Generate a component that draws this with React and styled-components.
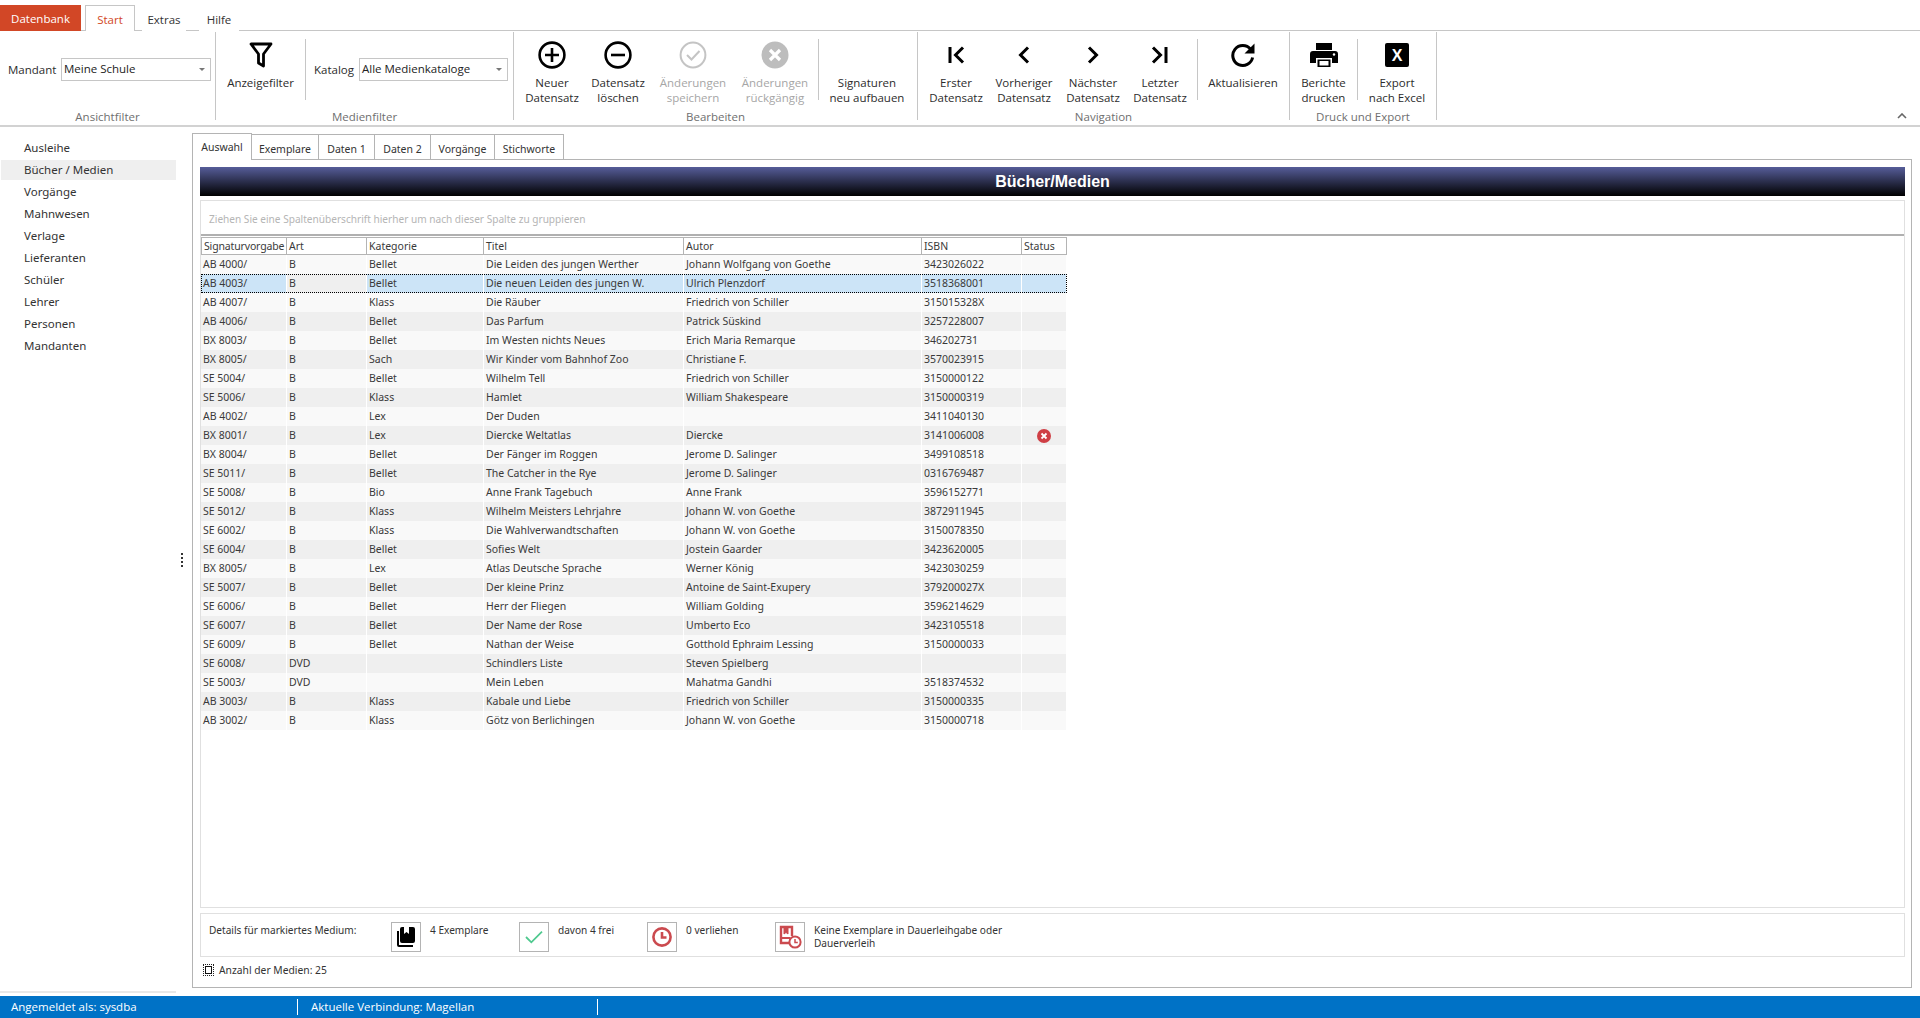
import React from 'react';
import styled, { createGlobalStyle } from 'styled-components';

const GlobalStyle = createGlobalStyle`
  html, body { margin: 0; padding: 0; height: 100%; background: #fff; overflow: hidden; }
  body { font-family: "Open Sans", "Liberation Sans", sans-serif; color: #2c2c2c; }
  * { box-sizing: border-box; }
`;

const uiFont = `"Open Sans", "Liberation Sans", sans-serif`;
const gridFont = `"Noto Sans", "Liberation Sans", sans-serif`;

const Page = styled.div`
  height: 1018px;
  display: flex;
  flex-direction: column;
`;

/* ribbon */
const TabStrip = styled.div`
  height: 31px;
  padding-top: 5px;
  display: flex;
  align-items: stretch;
  border-bottom: 1px solid #c6c6c6;
  font-family: ${uiFont};
  font-size: 11.5px;
`;

const AppTab = styled.div`
  width: 81px;
  margin-bottom: -1px;
  background: #d24726;
  color: #fff;
  display: flex;
  align-items: center;
  justify-content: center;
`;

const RibbonTab = styled.div`
  width: ${p => p.$w}px;
  margin-left: ${p => p.$ml || 0}px;
  margin-bottom: -1px;
  display: flex;
  align-items: center;
  justify-content: center;
  color: ${p => (p.$active ? '#d24726' : '#333')};
  background: #fff;
  border: ${p => (p.$active ? '1px solid #c6c6c6' : 'none')};
  border-bottom: none;
  padding-top: 2px;
`;

const Ribbon = styled.div`
  position: relative;
  height: 96px;
  display: flex;
  border-bottom: 2px solid #d2d2d2;
  font-family: ${uiFont};
  font-size: 11.5px;
  line-height: 15px;
`;

const Group = styled.div`
  width: ${p => p.$w}px;
  height: 88px;
  margin-top: 1px;
  border-right: 1px solid #c6c6c6;
`;

const GroupBody = styled.div`
  height: 76px;
  display: flex;
  padding-left: ${p => p.$pl || 0}px;
`;

const GroupLabel = styled.div`
  height: 18px;
  text-align: center;
  color: #6f6f6f;
  line-height: 18px;
`;

const InnerSep = styled.div`
  width: 1px;
  height: 61px;
  margin-top: 7px;
  margin-left: ${p => p.$ml || 0}px;
  background: #c6c6c6;
  flex: none;
`;

const RibbonButton = styled.div`
  width: ${p => p.$w}px;
  flex: none;
  display: flex;
  flex-direction: column;
  align-items: center;
  padding-top: 10px;
  text-align: center;
  color: ${p => (p.$off ? '#a6a6a6' : '#2c2c2c')};
`;

const IconSlot = styled.div`
  width: 32px;
  height: 26px;
  margin-bottom: 7px;
  display: flex;
  align-items: center;
  justify-content: center;
  flex: none;
`;

const FieldLabel = styled.span`
  margin-left: ${p => p.$ml}px;
  width: ${p => p.$w}px;
  flex: none;
  margin-top: 30px;
`;

const Combo = styled.div`
  width: ${p => p.$w}px;
  height: 23px;
  margin-top: 26px;
  flex: none;
  border: 1px solid #c6c6c6;
  padding: 2px 2px 0 2px;
  display: flex;
  justify-content: space-between;
  color: #222;
`;

const ComboArrow = styled.span`
  width: 0;
  height: 0;
  margin: 7px 3px 0 0;
  border-left: 3px solid transparent;
  border-right: 3px solid transparent;
  border-top: 3px solid #777;
`;

const ExcelBadge = styled.div`
  width: 24px;
  height: 24px;
  border-radius: 2px;
  background: #000;
  color: #fff;
  font-family: "Liberation Sans", sans-serif;
  font-size: 16px;
  font-weight: 700;
  display: flex;
  align-items: center;
  justify-content: center;
`;

const Collapse = styled.svg`
  position: absolute;
  right: 13px;
  top: 82px;
`;

/* body */
const Main = styled.div`
  flex: 1;
  min-height: 0;
  display: flex;
  font-family: ${gridFont};
`;

const Sidebar = styled.div`
  width: 176px;
  height: 866px;
  flex: none;
  padding: 11px 0 0 1px;
  border-bottom: 2px solid #e8e8e8;
  font-size: 11.5px;
  color: #333;
`;

const NavItem = styled.div`
  height: 20px;
  margin-bottom: 2px;
  padding-left: 23px;
  line-height: 20px;
  background: ${p => (p.$active ? '#efefef' : 'transparent')};
`;

const Splitter = styled.div`
  width: 16px;
  flex: none;
  display: flex;
  flex-direction: column;
  justify-content: center;
  align-items: center;
  gap: 2px;
  padding: 0 4px 4px 0;
`;

const Dot = styled.span`
  width: 2px;
  height: 2px;
  background: #333;
`;

const Workspace = styled.div`
  width: 1720px;
  flex: none;
  display: flex;
  flex-direction: column;
  padding: 6px 0 8px;
  font-size: 10.5px;
`;

const PageTabs = styled.div`
  height: 26px;
  flex: none;
  display: flex;
  align-items: flex-end;
  position: relative;
  z-index: 1;
`;

const PageTab = styled.div`
  width: ${p => p.$w}px;
  height: ${p => (p.$active ? 27 : 25)}px;
  margin-bottom: ${p => (p.$active ? -1 : 0)}px;
  padding-top: ${p => (p.$active ? 0 : 3)}px;
  display: flex;
  align-items: center;
  justify-content: center;
  background: #fff;
  color: #333;
  border: 1px solid #b4b4b4;
  border-bottom: none;
  border-left: ${p => (p.$active || p.$first ? '1px solid #b4b4b4' : 'none')};
`;

const Panel = styled.div`
  flex: 1;
  min-height: 0;
  border: 1px solid #b4b4b4;
  padding: 7px 6px 0 7px;
  display: flex;
  flex-direction: column;
`;

const TitleBar = styled.div`
  height: 29px;
  flex: none;
  background: linear-gradient(#565d99, #000);
  color: #fff;
  font-family: "Liberation Sans", sans-serif;
  font-size: 16px;
  font-weight: 700;
  display: flex;
  align-items: center;
  justify-content: center;
`;

const GridFrame = styled.div`
  height: 708px;
  margin-top: 4px;
  flex: none;
  border: 1px solid #e0e0e0;
  display: flex;
  flex-direction: column;
`;

const GroupHint = styled.div`
  height: 35px;
  flex: none;
  padding: 7px 0 0 8px;
  line-height: 22px;
  font-size: 10.1px;
  color: #b5b5b5;
  border-bottom: 2px solid #b0b0b0;
`;

const GridTable = styled.div`
  width: 866px;
  line-height: 19px;
  color: #3a3a3a;
`;

const columns = '86px 80px 117px 200px 238px 100px 45px';

const HeadRow = styled.div`
  display: grid;
  grid-template-columns: ${columns};
  height: 19px;
  border-top: 1px solid #fff;
`;

const HeadCell = styled.div`
  border: 1px solid #b4b4b4;
  border-left: ${p => (p.$first ? '1px solid #b4b4b4' : 'none')};
  padding-left: 2px;
  line-height: 16px;
  letter-spacing: ${p => (p.$first ? '-0.15px' : '0')};
  white-space: nowrap;
  overflow: hidden;
`;

const Row = styled.div`
  display: grid;
  grid-template-columns: ${columns};
  height: 19px;
  background: ${p => (p.$even ? '#efefef' : '#f9f9f9')};
  ${p => p.$selected && 'background: #cce4f7; outline: 1px dotted #000; outline-offset: -1px;'}
`;

const Cell = styled.div`
  padding-left: 2px;
  border-right: 1px solid #fff;
  white-space: nowrap;
  overflow: hidden;
  display: flex;
  align-items: center;
  background: ${p => (p.$focus ? '#efefef' : 'transparent')};
`;

const StatusDot = styled.svg`
  margin-left: 13px;
`;

const DetailBox = styled.div`
  height: 44px;
  margin-top: 5px;
  flex: none;
  border: 1px solid #e0e0e0;
  display: flex;
  padding: 8px 0 0 8px;
  line-height: 13px;
  font-size: 10.1px;
  color: #333;
`;

const DetailTitle = styled.div`
  width: 182px;
  flex: none;
  padding-top: 2px;
`;

const DetailItem = styled.div`
  width: ${p => p.$w}px;
  flex: none;
  display: flex;
  gap: 9px;
`;

const DetailIcon = styled.div`
  width: 30px;
  height: 30px;
  flex: none;
  border: 1px solid #b4b4b4;
  display: flex;
  align-items: center;
  justify-content: center;
`;

const DetailText = styled.div`
  padding-top: 2px;
`;

const CountLine = styled.div`
  display: flex;
  align-items: center;
  gap: 5px;
  margin: 6px 0 0 3px;
  height: 14px;
  font-size: 10.3px;
  color: #333;
`;

const CountMark = styled.div`
  width: 11px;
  height: 12px;
  border: 1px dotted #222;
  display: flex;
  align-items: center;
  justify-content: center;
`;

const CountCore = styled.span`
  width: 7px;
  height: 8px;
  border: 1px solid #111;
`;

const StatusBar = styled.div`
  height: 22px;
  flex: none;
  background: #0072c6;
  color: #fff;
  display: flex;
  align-items: center;
  font-family: ${uiFont};
  font-size: 11.5px;
`;

const StatusPane = styled.div`
  width: ${p => p.$w}px;
  height: 16px;
  padding-left: ${p => p.$pl}px;
  line-height: 15px;
  border-right: 1px solid #fff;
`;

/* icons */
const CirclePlus = () => (
  <svg width="30" height="30" viewBox="0 0 30 30" fill="none" stroke="#000" strokeWidth="2.6">
    <circle cx="15" cy="15" r="12.4" />
    <path d="M15 8v14M8 15h14" />
  </svg>
);

const CircleMinus = () => (
  <svg width="30" height="30" viewBox="0 0 30 30" fill="none" stroke="#000" strokeWidth="2.6">
    <circle cx="15" cy="15" r="12.4" />
    <path d="M8 15h14" />
  </svg>
);

const CircleCheck = () => (
  <svg width="30" height="30" viewBox="0 0 30 30" fill="none" stroke="#c4c4c4" strokeWidth="2">
    <circle cx="15" cy="15" r="12.4" />
    <path d="M9 15l4.5 4.5L21.5 11" />
  </svg>
);

const CircleCross = () => (
  <svg width="30" height="30" viewBox="0 0 30 30">
    <circle cx="15" cy="15" r="13.5" fill="#bdbdbd" />
    <path d="M10 10l10 10M20 10L10 20" stroke="#fff" strokeWidth="3.2" />
  </svg>
);

const FunnelIcon = () => (
  <svg width="24" height="26" viewBox="0 0 24 26" fill="none" stroke="#000" strokeWidth="2.8" strokeLinejoin="round">
    <path d="M2 2h20l-7.5 10v12L9.5 21V12z" />
  </svg>
);

const NavIcon = ({ d }) => (
  <svg width="22" height="22" viewBox="0 0 22 22" fill="none" stroke="#000" strokeWidth="3">
    <path d={d} />
  </svg>
);

const RefreshIcon = () => (
  <svg width="26" height="26" viewBox="0 0 26 26" fill="none">
    <path d="M20.6 7.2A10 10 0 1 0 22.6 15.5" stroke="#000" strokeWidth="3" />
    <path d="M24.5 1.5v10h-10z" fill="#000" />
  </svg>
);

const PrinterIcon = () => (
  <svg width="28" height="26" viewBox="0 0 28 26">
    <path d="M6 1h16v7H6z" fill="#000" />
    <path d="M3 9h22a3 3 0 0 1 3 3v9h-6v-5H6v5H0v-9a3 3 0 0 1 3-3z" fill="#000" />
    <path d="M7.5 17.5h13V25h-13z" fill="#000" />
    <path d="M9.5 19h9v4.5h-9z" fill="#fff" />
    <circle cx="24" cy="12.5" r="1.2" fill="#fff" />
  </svg>
);

const BooksIcon = () => (
  <svg width="20" height="22" viewBox="0 0 20 22">
    <path d="M1 5h2v14h14v2H3a2 2 0 0 1-2-2z" fill="#000" />
    <path d="M6 1h2v7l2.5-2L13 8V1h4a2 2 0 0 1 2 2v12a2 2 0 0 1-2 2H6a2 2 0 0 1-2-2V3a2 2 0 0 1 2-2z" fill="#000" />
  </svg>
);

const TickIcon = () => (
  <svg width="20" height="16" viewBox="0 0 22 18" fill="none" stroke="#4fc98f" strokeWidth="2">
    <path d="M2 9l6 6L20 3" />
  </svg>
);

const ClockIcon = () => (
  <svg width="22" height="22" viewBox="0 0 22 22" fill="none" stroke="#cb4a4f" strokeWidth="2.6">
    <circle cx="11" cy="11" r="8.6" />
    <path d="M11 6v5.5h4.5" />
  </svg>
);

const LoanIcon = () => (
  <svg width="24" height="24" viewBox="0 0 24 24" fill="none" stroke="#cb4a4f">
    <path d="M12 18H3V2h11v9" strokeWidth="2.4" />
    <path d="M6 2v7l2-1.5L10 9V2" fill="#cb4a4f" strokeWidth="1" />
    <path d="M3 13h9" strokeWidth="2" />
    <circle cx="17" cy="17" r="5.6" fill="#fff" strokeWidth="2" />
    <path d="M17 14v3.4h2.8" strokeWidth="1.5" />
  </svg>
);

const columnsTitles = ['Signaturvorgabe', 'Art', 'Kategorie', 'Titel', 'Autor', 'ISBN', 'Status'];

const media = [
  ['AB 4000/', 'B', 'Bellet', 'Die Leiden des jungen Werther', 'Johann Wolfgang von Goethe', '3423026022'],
  ['AB 4003/', 'B', 'Bellet', 'Die neuen Leiden des jungen W.', 'Ulrich Plenzdorf', '3518368001'],
  ['AB 4007/', 'B', 'Klass', 'Die Räuber', 'Friedrich von Schiller', '315015328X'],
  ['AB 4006/', 'B', 'Bellet', 'Das Parfum', 'Patrick Süskind', '3257228007'],
  ['BX 8003/', 'B', 'Bellet', 'Im Westen nichts Neues', 'Erich Maria Remarque', '346202731'],
  ['BX 8005/', 'B', 'Sach', 'Wir Kinder vom Bahnhof Zoo', 'Christiane F.', '3570023915'],
  ['SE 5004/', 'B', 'Bellet', 'Wilhelm Tell', 'Friedrich von Schiller', '3150000122'],
  ['SE 5006/', 'B', 'Klass', 'Hamlet', 'William Shakespeare', '3150000319'],
  ['AB 4002/', 'B', 'Lex', 'Der Duden', '', '3411040130'],
  ['BX 8001/', 'B', 'Lex', 'Diercke Weltatlas', 'Diercke', '3141006008', true],
  ['BX 8004/', 'B', 'Bellet', 'Der Fänger im Roggen', 'Jerome D. Salinger', '3499108518'],
  ['SE 5011/', 'B', 'Bellet', 'The Catcher in the Rye', 'Jerome D. Salinger', '0316769487'],
  ['SE 5008/', 'B', 'Bio', 'Anne Frank Tagebuch', 'Anne Frank', '3596152771'],
  ['SE 5012/', 'B', 'Klass', 'Wilhelm Meisters Lehrjahre', 'Johann W. von Goethe', '3872911945'],
  ['SE 6002/', 'B', 'Klass', 'Die Wahlverwandtschaften', 'Johann W. von Goethe', '3150078350'],
  ['SE 6004/', 'B', 'Bellet', 'Sofies Welt', 'Jostein Gaarder', '3423620005'],
  ['BX 8005/', 'B', 'Lex', 'Atlas Deutsche Sprache', 'Werner König', '3423030259'],
  ['SE 5007/', 'B', 'Bellet', 'Der kleine Prinz', 'Antoine de Saint-Exupery', '379200027X'],
  ['SE 6006/', 'B', 'Bellet', 'Herr der Fliegen', 'William Golding', '3596214629'],
  ['SE 6007/', 'B', 'Bellet', 'Der Name der Rose', 'Umberto Eco', '3423105518'],
  ['SE 6009/', 'B', 'Bellet', 'Nathan der Weise', 'Gotthold Ephraim Lessing', '3150000033'],
  ['SE 6008/', 'DVD', '', 'Schindlers Liste', 'Steven Spielberg', ''],
  ['SE 5003/', 'DVD', '', 'Mein Leben', 'Mahatma Gandhi', '3518374532'],
  ['AB 3003/', 'B', 'Klass', 'Kabale und Liebe', 'Friedrich von Schiller', '3150000335'],
  ['AB 3002/', 'B', 'Klass', 'Götz von Berlichingen', 'Johann W. von Goethe', '3150000718'],
];

const navItems = ['Ausleihe', 'Bücher / Medien', 'Vorgänge', 'Mahnwesen', 'Verlage', 'Lieferanten', 'Schüler', 'Lehrer', 'Personen', 'Mandanten'];

const pageTabs = [
  ['Auswahl', 60],
  ['Exemplare', 67],
  ['Daten 1', 56],
  ['Daten 2', 56],
  ['Vorgänge', 64],
  ['Stichworte', 69],
];

const RBtn = ({ w, off, icon, children }) => (
  <RibbonButton $w={w} $off={off}>
    <IconSlot>{icon}</IconSlot>
    {children}
  </RibbonButton>
);

const App = () => (
  <Page>
    <GlobalStyle />
    <TabStrip>
      <AppTab>Datenbank</AppTab>
      <RibbonTab $w={50} $ml={4} $active>Start</RibbonTab>
      <RibbonTab $w={44} $ml={7}>Extras</RibbonTab>
      <RibbonTab $w={40} $ml={13}>Hilfe</RibbonTab>
    </TabStrip>

    <Ribbon>
      <Group $w={216}>
        <GroupBody>
          <FieldLabel $ml={8} $w={53}>Mandant</FieldLabel>
          <Combo $w={150}>Meine Schule<ComboArrow /></Combo>
        </GroupBody>
        <GroupLabel>Ansichtfilter</GroupLabel>
      </Group>
      <Group $w={298}>
        <GroupBody>
          <RBtn w={89} icon={<FunnelIcon />}>Anzeigefilter</RBtn>
          <InnerSep />
          <FieldLabel $ml={8} $w={45}>Katalog</FieldLabel>
          <Combo $w={149}>Alle Medienkataloge<ComboArrow /></Combo>
        </GroupBody>
        <GroupLabel>Medienfilter</GroupLabel>
      </Group>
      <Group $w={404}>
        <GroupBody $pl={8}>
          <RBtn w={60} icon={<CirclePlus />}>Neuer<br />Datensatz</RBtn>
          <RBtn w={72} icon={<CircleMinus />}>Datensatz<br />löschen</RBtn>
          <RBtn w={78} off icon={<CircleCheck />}>Änderungen<br />speichern</RBtn>
          <RBtn w={86} off icon={<CircleCross />}>Änderungen<br />rückgängig</RBtn>
          <InnerSep />
          <RBtn w={96}>Signaturen<br />neu aufbauen</RBtn>
        </GroupBody>
        <GroupLabel>Bearbeiten</GroupLabel>
      </Group>
      <Group $w={372}>
        <GroupBody $pl={4}>
          <RBtn w={68} icon={<NavIcon d="M5 3v16M18 3.5L10.5 11l7.5 7.5" />}>Erster<br />Datensatz</RBtn>
          <RBtn w={68} icon={<NavIcon d="M15 3.5L7.5 11l7.5 7.5" />}>Vorheriger<br />Datensatz</RBtn>
          <RBtn w={70} icon={<NavIcon d="M7 3.5l7.5 7.5L7 18.5" />}>Nächster<br />Datensatz</RBtn>
          <RBtn w={64} icon={<NavIcon d="M4 3.5l7.5 7.5L4 18.5M17 3v16" />}>Letzter<br />Datensatz</RBtn>
          <InnerSep $ml={5} />
          <RBtn w={90} icon={<RefreshIcon />}>Aktualisieren</RBtn>
        </GroupBody>
        <GroupLabel>Navigation</GroupLabel>
      </Group>
      <Group $w={147}>
        <GroupBody>
          <RBtn w={67} icon={<PrinterIcon />}>Berichte<br />drucken</RBtn>
          <InnerSep />
          <RBtn w={78} icon={<ExcelBadge>X</ExcelBadge>}>Export<br />nach Excel</RBtn>
        </GroupBody>
        <GroupLabel>Druck und Export</GroupLabel>
      </Group>
      <Collapse width="10" height="6" viewBox="0 0 10 6" fill="none" stroke="#666" strokeWidth="1.6">
        <path d="M1 5l4-4 4 4" />
      </Collapse>
    </Ribbon>

    <Main>
      <Sidebar>
        {navItems.map(item => (
          <NavItem key={item} $active={item === 'Bücher / Medien'}>{item}</NavItem>
        ))}
      </Sidebar>
      <Splitter><Dot /><Dot /><Dot /><Dot /></Splitter>
      <Workspace>
        <PageTabs>
          {pageTabs.map(([label, w], i) => (
            <PageTab key={label} $w={w} $active={i === 0} $first={i === 0}>{label}</PageTab>
          ))}
        </PageTabs>
        <Panel>
          <TitleBar>Bücher/Medien</TitleBar>
          <GridFrame>
            <GroupHint>Ziehen Sie eine Spaltenüberschrift hierher um nach dieser Spalte zu gruppieren</GroupHint>
            <GridTable>
              <HeadRow>
                {columnsTitles.map((title, i) => (
                  <HeadCell key={title} $first={i === 0}>{title}</HeadCell>
                ))}
              </HeadRow>
              {media.map((row, i) => (
                <Row key={row[0] + row[3]} $even={i % 2 === 1} $selected={i === 1}>
                  {row.slice(0, 6).map((value, c) => (
                    <Cell key={c} $focus={i === 1 && c === 1}>{value}</Cell>
                  ))}
                  <Cell>
                    {row[6] && (
                      <StatusDot width="14" height="14" viewBox="0 0 14 14">
                        <circle cx="7" cy="7" r="7" fill="#cf3f45" />
                        <path d="M4.5 4.5l5 5M9.5 4.5l-5 5" stroke="#fff" strokeWidth="1.8" />
                      </StatusDot>
                    )}
                  </Cell>
                </Row>
              ))}
            </GridTable>
          </GridFrame>
          <DetailBox>
            <DetailTitle>Details für markiertes Medium:</DetailTitle>
            <DetailItem $w={128}>
              <DetailIcon><BooksIcon /></DetailIcon>
              <DetailText>4 Exemplare</DetailText>
            </DetailItem>
            <DetailItem $w={128}>
              <DetailIcon><TickIcon /></DetailIcon>
              <DetailText>davon 4 frei</DetailText>
            </DetailItem>
            <DetailItem $w={128}>
              <DetailIcon><ClockIcon /></DetailIcon>
              <DetailText>0 verliehen</DetailText>
            </DetailItem>
            <DetailItem $w={250}>
              <DetailIcon><LoanIcon /></DetailIcon>
              <DetailText>Keine Exemplare in Dauerleihgabe oder<br />Dauerverleih</DetailText>
            </DetailItem>
          </DetailBox>
          <CountLine>
            <CountMark><CountCore /></CountMark>
            Anzahl der Medien: 25
          </CountLine>
        </Panel>
      </Workspace>
    </Main>

    <StatusBar>
      <StatusPane $w={298} $pl={11}>Angemeldet als: sysdba</StatusPane>
      <StatusPane $w={300} $pl={13}>Aktuelle Verbindung: Magellan</StatusPane>
    </StatusBar>
  </Page>
);

export default App;
